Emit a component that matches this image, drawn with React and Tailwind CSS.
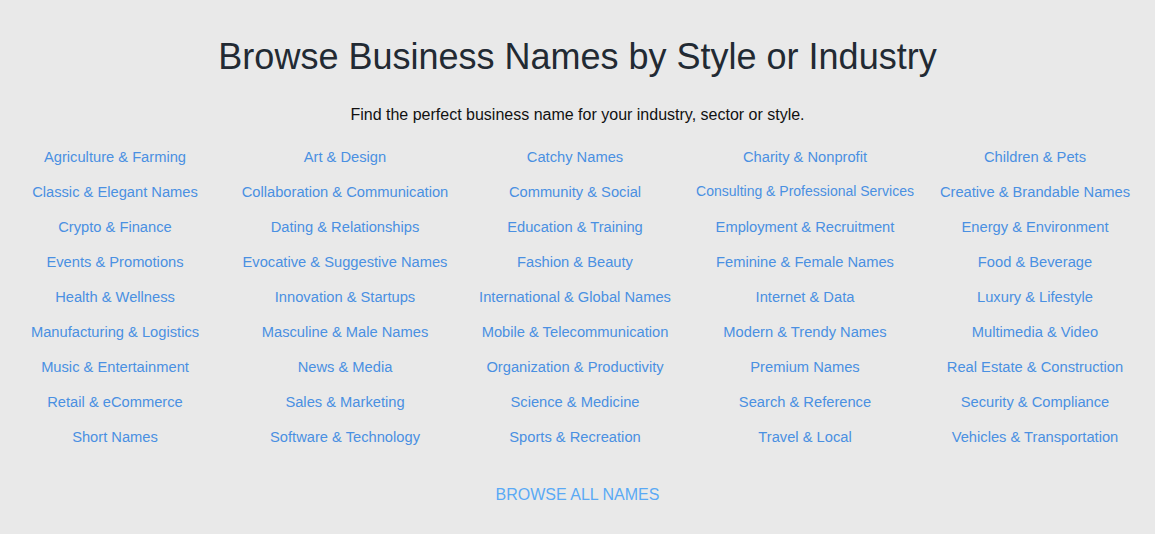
const categories = [
  'Agriculture & Farming', 'Art & Design', 'Catchy Names', 'Charity & Nonprofit', 'Children & Pets',
  'Classic & Elegant Names', 'Collaboration & Communication', 'Community & Social', 'Consulting & Professional Services', 'Creative & Brandable Names',
  'Crypto & Finance', 'Dating & Relationships', 'Education & Training', 'Employment & Recruitment', 'Energy & Environment',
  'Events & Promotions', 'Evocative & Suggestive Names', 'Fashion & Beauty', 'Feminine & Female Names', 'Food & Beverage',
  'Health & Wellness', 'Innovation & Startups', 'International & Global Names', 'Internet & Data', 'Luxury & Lifestyle',
  'Manufacturing & Logistics', 'Masculine & Male Names', 'Mobile & Telecommunication', 'Modern & Trendy Names', 'Multimedia & Video',
  'Music & Entertainment', 'News & Media', 'Organization & Productivity', 'Premium Names', 'Real Estate & Construction',
  'Retail & eCommerce', 'Sales & Marketing', 'Science & Medicine', 'Search & Reference', 'Security & Compliance',
  'Short Names', 'Software & Technology', 'Sports & Recreation', 'Travel & Local', 'Vehicles & Transportation',
]

export default function App() {
  return (
    <div className="min-h-[534px] bg-[#e9e9e9] font-['Liberation_Sans',Arial,sans-serif]">
      <div className="pt-[35px]">
        <h1 className="text-center text-[36px] leading-[44px] text-[#222a33]">
          Browse Business Names by Style or Industry
        </h1>
        <p className="mt-[25px] text-center text-[16px] leading-[22px] text-[#111]">
          Find the perfect business name for your industry, sector or style.
        </p>
        <div className="mt-[22px] grid w-[1150px] grid-cols-5">
          {categories.map(c => (
            <a
              key={c}
              href="#"
              className={c.length > 32
                ? 'h-[35px] text-center text-[14px] leading-[17px] text-[#4a90e2] whitespace-nowrap'
                : 'h-[35px] text-center text-[14.7px] leading-[18px] text-[#4a90e2] whitespace-nowrap'}
            >
              {c}
            </a>
          ))}
        </div>
        <div className="mt-[20px] text-center">
          <a href="#" className="text-[16px] text-[#5aa9f5]">BROWSE ALL NAMES</a>
        </div>
      </div>
    </div>
  )
}
